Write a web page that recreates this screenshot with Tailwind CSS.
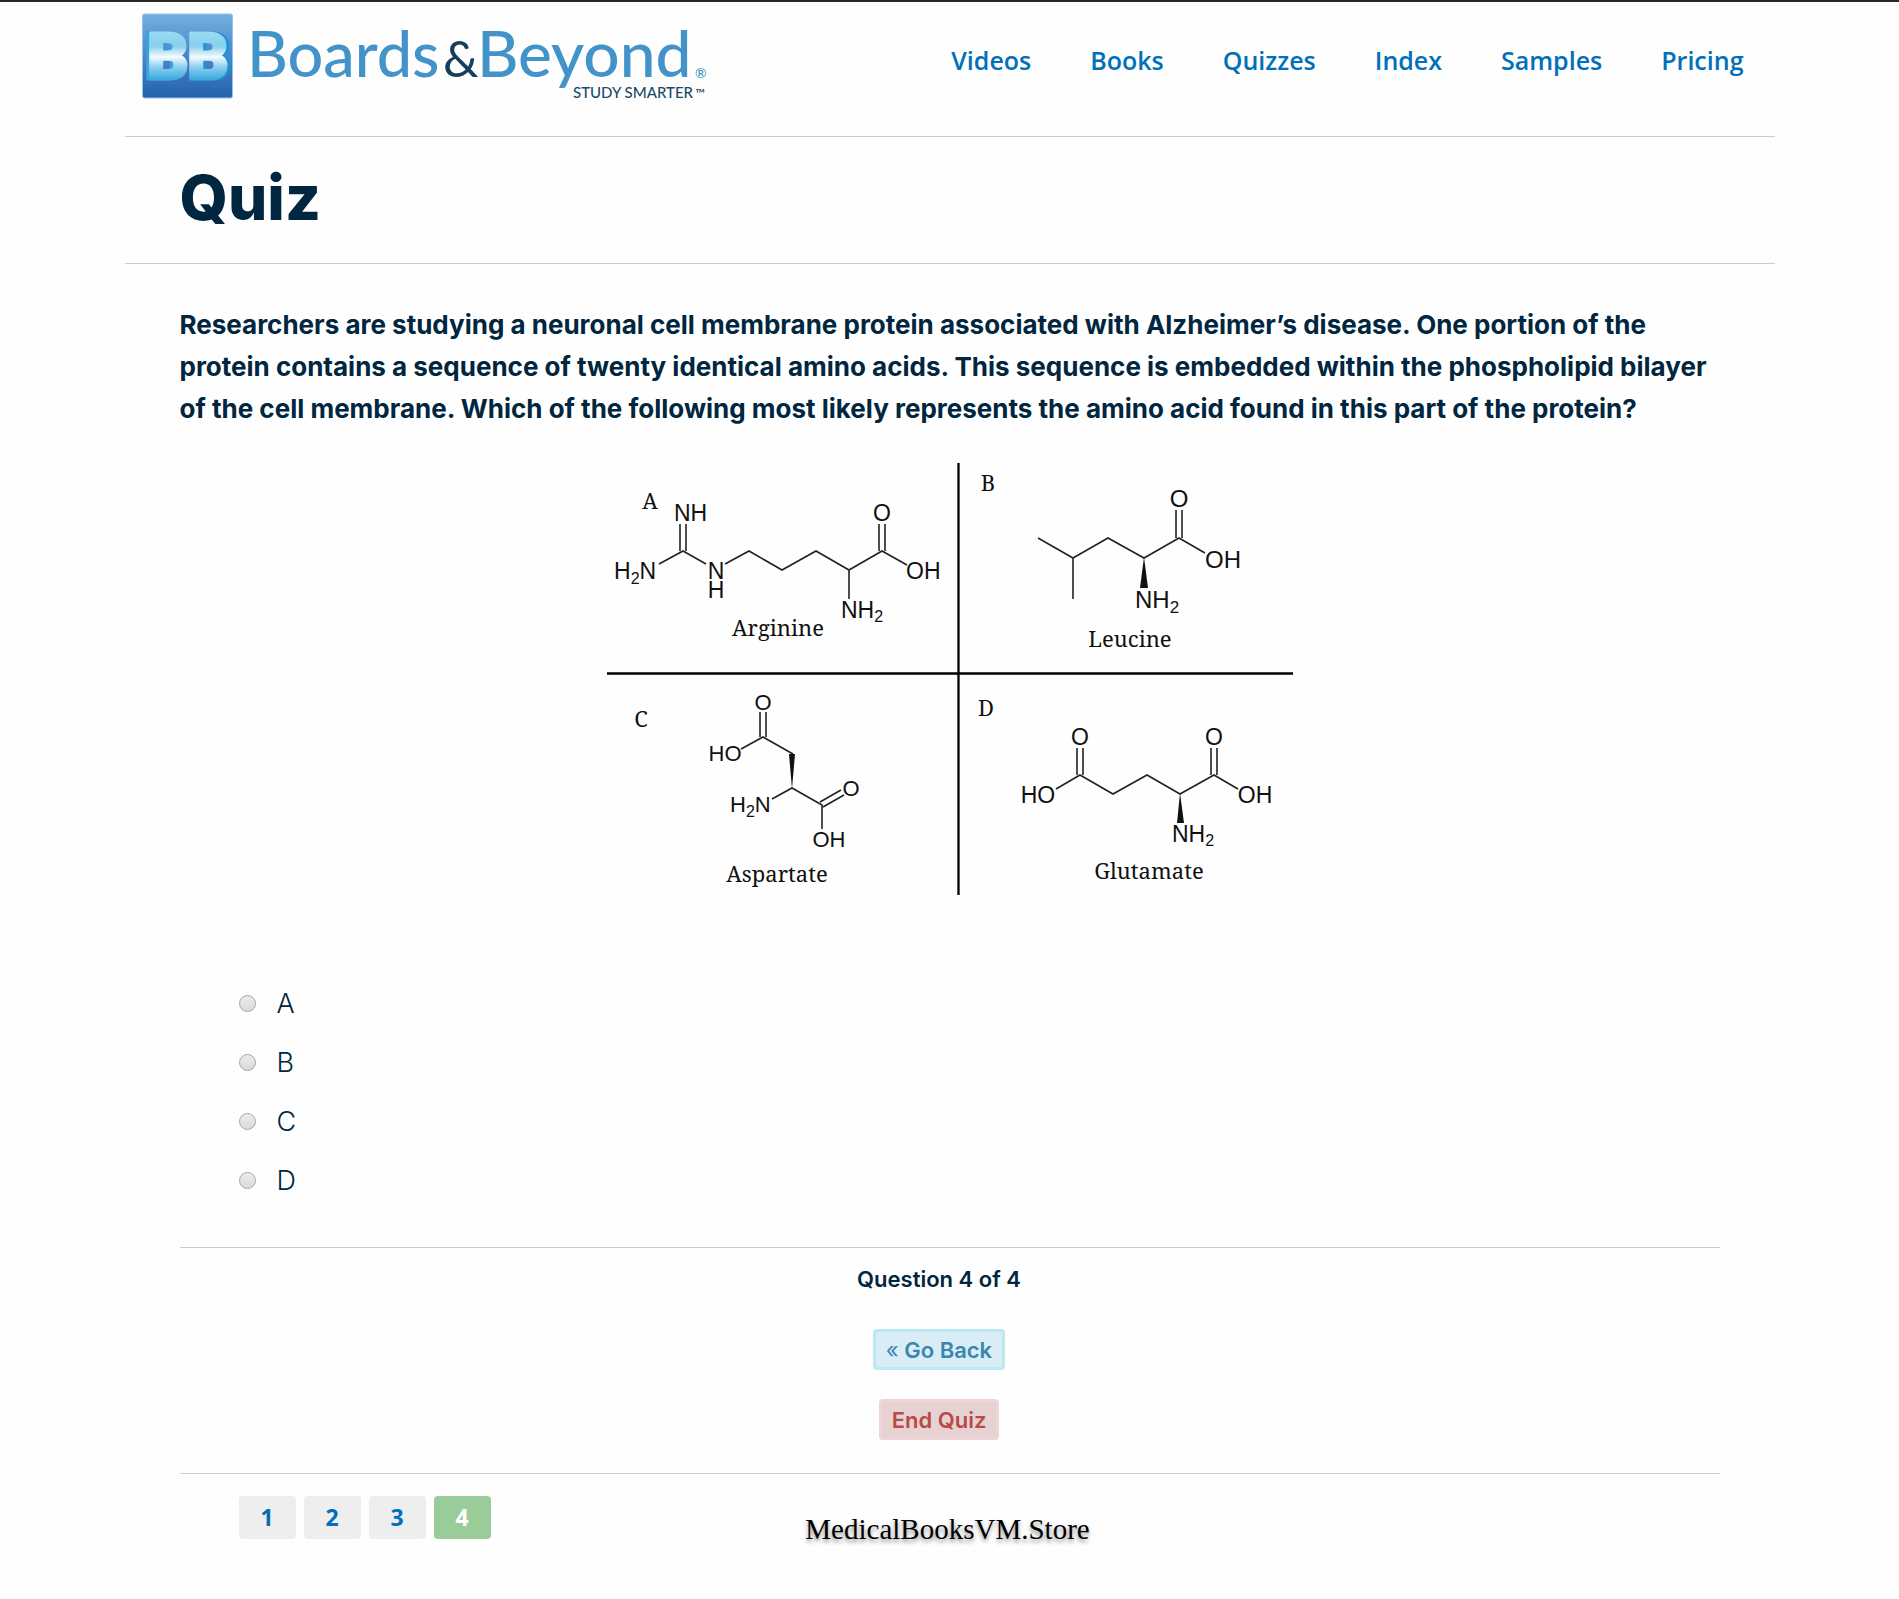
<!DOCTYPE html>
<html lang="en">
<head>
<meta charset="utf-8">
<meta name="viewport" content="width=device-width, initial-scale=1">
<title>Quiz - Boards &amp; Beyond</title>
<script src="https://cdn.jsdelivr.net/npm/@tailwindcss/browser@4"></script>
</head>
<body class="min-h-screen border-t-2 border-[#2b2729] bg-[#fefefe] font-['Inter',sans-serif] text-[#002640]">
<div class="mx-auto max-w-[1650px]">

  <header class="flex items-start justify-between border-b border-[#ccc] pt-2 pr-[31px] pb-[31px] pl-[15px]">
    <a href="#" aria-label="Boards and Beyond home">
      <svg class="block h-[95px] w-[570px]" viewBox="0 0 570 95" role="img">
        <defs>
          <linearGradient id="tile" x1="0" y1="0" x2="0" y2="1">
            <stop offset="0" stop-color="#73afe0"/><stop offset=".5" stop-color="#4a86c8"/><stop offset="1" stop-color="#2461ae"/>
          </linearGradient>
          <linearGradient id="face" gradientUnits="userSpaceOnUse" x1="0" y1="20" x2="0" y2="74">
            <stop offset="0" stop-color="#9bdcf2"/><stop offset=".3" stop-color="#86d0ee"/><stop offset=".5" stop-color="#f4fbff"/><stop offset=".68" stop-color="#8fd0f0"/><stop offset="1" stop-color="#1d9ad8"/>
          </linearGradient>
        </defs>
        <rect x="2.500" y="4" width="90" height="84" rx="2" fill="url(#tile)" stroke="#8fc3ea"/>
        <g font-family="Roboto, sans-serif" font-weight="900" font-size="64" text-anchor="middle" fill="url(#face)" stroke="url(#face)" stroke-width="3" stroke-linejoin="round">
          <text x="28" y="69" class="drop-shadow-[-3px_0px_0px_#3aa5dd]">B</text>
          <text x="68" y="69" class="drop-shadow-[3px_0px_0px_#1f93d4]">B</text>
        </g>
        <g font-family="Lato, sans-serif" font-weight="500" fill="#4193c9">
          <text x="107" y="67" font-size="63">Boards</text>
          <text x="303" y="67" font-size="50" fill="#143f5c" font-weight="400">&amp;</text>
          <text x="337" y="67" font-size="64">Beyond</text>
          <text x="555" y="68" font-size="14">®</text>
          <text x="433" y="88" font-size="15" fill="#1c4a68">STUDY SMARTER</text>
          <text x="555" y="88" font-size="13" fill="#1c4a68">™</text>
        </g>
      </svg>
    </a>
    <nav class="flex gap-[59px] pt-[34px] font-['Open_Sans',sans-serif] text-[25px] leading-8 font-semibold text-[#0070ba]">
      <a href="#">Videos</a>
      <a href="#">Books</a>
      <a href="#">Quizzes</a>
      <a href="#">Index</a>
      <a href="#">Samples</a>
      <a href="#">Pricing</a>
    </nav>
  </header>

  <div class="border-b border-[#ccc] px-[55px] pt-[29px] pb-[33px]">
    <h1 class="text-[62px] leading-16 font-extrabold">Quiz</h1>
  </div>

  <main class="px-[55px] pt-10">
    <form>
      <p id="question" class="text-[26px] leading-[42px] font-bold">Researchers are studying a neuronal cell membrane protein associated with Alzheimer’s disease. One portion of the<br>protein contains a sequence of twenty identical amino acids. This sequence is embedded within the phospholipid bilayer<br>of the cell membrane. Which of the following most likely represents the amino acid found in this part of the protein?</p>

      <svg class="mx-auto mt-[30px] block h-[440px] w-[700px]" viewBox="0 0 700 440" role="img" aria-label="Structures of arginine, leucine, aspartate and glutamate">
        <path d="M358.500 3V435M7 213.500H693" stroke="#000" stroke-width="2.300"/>

        <!-- A: arginine -->
        <g transform="translate(-10 -10)">
          <path d="M69 114L93 101L116 114M90 74V101M96 74V101M135 114L159 101L192 120L226 101L259 120L292 101L317 115M289 74V101M295 74V101M259 120V149" fill="none" stroke="#222" stroke-width="1.600"/>
          <g font-family="Liberation Sans, sans-serif" font-size="23" fill="#111">
            <text x="84" y="71">NH</text>
            <text x="24" y="129">H<tspan font-size="16" dy="5">2</tspan><tspan dy="-5">N</tspan></text>
            <text x="126" y="129" text-anchor="middle">N</text>
            <text x="126" y="148" text-anchor="middle">H</text>
            <text x="292" y="71" text-anchor="middle">O</text>
            <text x="316" y="129">OH</text>
            <text x="251" y="168">NH<tspan font-size="16" dy="4">2</tspan></text>
          </g>
          <g font-family="Noto Serif, DejaVu Serif Condensed, serif" font-size="22" text-anchor="middle" fill="#111">
            <text x="60" y="59">A</text>
            <text x="188" y="186">Arginine</text>
          </g>
        </g>

        <!-- B: leucine -->
        <g transform="translate(340 -10)">
          <path d="M98 88L133 108L168 88L204 108L239 88L265 103M133 108V149M236 60V88M242 60V88" fill="none" stroke="#222" stroke-width="1.600"/>
          <path d="M204 107L200 138H208Z" fill="#111"/>
          <g font-family="Liberation Sans, sans-serif" font-size="24" fill="#111">
            <text x="239" y="57" text-anchor="middle">O</text>
            <text x="265" y="118">OH</text>
            <text x="195" y="158">NH<tspan font-size="17" dy="5">2</tspan></text>
          </g>
          <g font-family="Noto Serif, DejaVu Serif Condensed, serif" font-size="22" text-anchor="middle" fill="#111">
            <text x="48" y="41">B</text>
            <text x="190" y="197">Leucine</text>
          </g>
        </g>

        <!-- C: aspartate -->
        <g transform="translate(-10 200)">
          <path d="M151 89L173 77L203 94M170 52V77M176 52V77M182 139L202 128L232 145V169M230 142L251 130M233 147L254 135" fill="none" stroke="#222" stroke-width="1.600"/>
          <path d="M202 129L199 94L205 94Z" fill="#111"/>
          <g font-family="Liberation Sans, sans-serif" font-size="22" fill="#111">
            <text x="173" y="50" text-anchor="middle">O</text>
            <text x="135" y="101" text-anchor="middle">HO</text>
            <text x="140" y="152">H<tspan font-size="16" dy="5">2</tspan><tspan dy="-5">N</tspan></text>
            <text x="261" y="136" text-anchor="middle">O</text>
            <text x="239" y="187" text-anchor="middle">OH</text>
          </g>
          <g font-family="Noto Serif, DejaVu Serif Condensed, serif" font-size="22" text-anchor="middle" fill="#111">
            <text x="51" y="67">C</text>
            <text x="187" y="222">Aspartate</text>
          </g>
        </g>

        <!-- D: glutamate -->
        <g transform="translate(340 200)">
          <path d="M116 129L140 115L173 134L207 115L240 134L274 115L298 129M137 88V115M143 88V115M271 88V115M277 88V115" fill="none" stroke="#222" stroke-width="1.600"/>
          <path d="M240 133L237 163H244Z" fill="#111"/>
          <g font-family="Liberation Sans, sans-serif" font-size="23" fill="#111">
            <text x="140" y="85" text-anchor="middle">O</text>
            <text x="274" y="85" text-anchor="middle">O</text>
            <text x="98" y="143" text-anchor="middle">HO</text>
            <text x="315" y="143" text-anchor="middle">OH</text>
            <text x="232" y="182">NH<tspan font-size="16" dy="4">2</tspan></text>
          </g>
          <g font-family="Noto Serif, DejaVu Serif Condensed, serif" font-size="22" text-anchor="middle" fill="#111">
            <text x="46" y="56">D</text>
            <text x="209" y="219">Glutamate</text>
          </g>
        </g>
      </svg>

      <div role="radiogroup" aria-labelledby="question" class="mt-[74px] flex flex-col items-start pb-[37px] pl-[59px] text-[27px] leading-[59px] font-light">
        <label class="flex items-center gap-[21px]"><input type="radio" name="answer" value="A" class="size-[17px] appearance-none rounded-full border border-[#a6a6a6] bg-linear-to-b from-[#ececec] to-[#dadada] checked:bg-[#0070ba]">A</label>
        <label class="flex items-center gap-[21px]"><input type="radio" name="answer" value="B" class="size-[17px] appearance-none rounded-full border border-[#a6a6a6] bg-linear-to-b from-[#ececec] to-[#dadada] checked:bg-[#0070ba]">B</label>
        <label class="flex items-center gap-[21px]"><input type="radio" name="answer" value="C" class="size-[17px] appearance-none rounded-full border border-[#a6a6a6] bg-linear-to-b from-[#ececec] to-[#dadada] checked:bg-[#0070ba]">C</label>
        <label class="flex items-center gap-[21px]"><input type="radio" name="answer" value="D" class="size-[17px] appearance-none rounded-full border border-[#a6a6a6] bg-linear-to-b from-[#ececec] to-[#dadada] checked:bg-[#0070ba]">D</label>
      </div>

      <div class="flex flex-col items-center border-y border-[#ccc] pt-[15px] pr-[21px] pb-[33px] text-[22px] font-semibold">
        <p class="leading-8">Question 4 of 4</p>
        <button type="button" class="mt-[34px] h-[41px] rounded border-3 border-[#bce8f1] bg-[#d9edf7] px-[10px] leading-8 text-[#3a87ad]"><span class="font-normal">«</span> Go Back</button>
        <button type="button" class="mt-[29px] h-[41px] rounded border-3 border-[#eed3d7] bg-[#e6d2d2] px-[10px] leading-8 text-[#b94a48]">End Quiz</button>
      </div>
    </form>

    <div class="grid grid-cols-[1fr_auto_1fr] pt-[22px] pb-14">
      <nav aria-label="Questions" class="flex gap-2 pl-[59px] text-center font-['Noto_Sans',sans-serif] text-[23px] leading-[42px] font-bold text-[#0070ba]">
        <a href="#" class="h-[43px] w-[57px] rounded bg-[#eee]">1</a>
        <a href="#" class="h-[43px] w-[57px] rounded bg-[#eee]">2</a>
        <a href="#" class="h-[43px] w-[57px] rounded bg-[#eee]">3</a>
        <a href="#" aria-current="page" class="h-[43px] w-[57px] rounded bg-[#9c9] text-white">4</a>
      </nav>
      <p class="pt-[15px] pr-1 font-['Liberation_Serif',serif] text-[29px] leading-9 text-black text-shadow-[0_3px_4px_rgb(0_0_0/0.45)]">MedicalBooksVM.Store</p>
    </div>
  </main>
</div>
</body>
</html>
